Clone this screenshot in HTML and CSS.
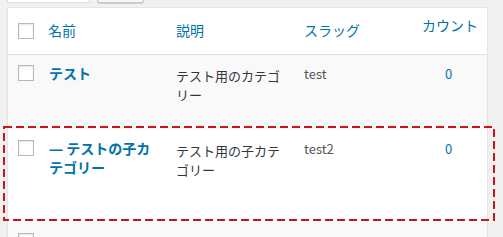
FILE: index.html
```html
<!DOCTYPE html>
<html lang="ja">
<head>
<meta charset="utf-8">
<link rel="stylesheet" href="styles.css">
</head>
<body>
<div class="page">
  <div class="toolbar">
    <div class="search-input"></div>
    <div class="search-btn"></div>
  </div>
  <div class="list">
    <div class="row head">
      <div class="cell check"><span class="cb"></span></div>
      <div class="cell name"><span class="th">名前</span></div>
      <div class="cell desc"><span class="th">説明</span></div>
      <div class="cell slug"><span class="th">スラッグ</span></div>
      <div class="cell count count-head"><span class="th">カウント</span></div>
    </div>
    <div class="row alt r1">
      <div class="cell check"><span class="cb"></span></div>
      <div class="cell name"><a class="title">テスト</a></div>
      <div class="cell desc">テスト用のカテゴリー</div>
      <div class="cell slug">test</div>
      <div class="cell count"><a class="num">0</a></div>
    </div>
    <div class="row r2">
      <div class="cell check"><span class="cb"></span></div>
      <div class="cell name"><a class="title"><span class="dash">—</span> テストの子カテゴリー</a></div>
      <div class="cell desc">テスト用の子カテゴリー</div>
      <div class="cell slug">test2</div>
      <div class="cell count"><a class="num">0</a></div>
    </div>
    <div class="row alt r3">
      <div class="cell check"><span class="cb"></span></div>
      <div class="cell name"></div>
      <div class="cell desc"></div>
      <div class="cell slug"></div>
      <div class="cell count"></div>
    </div>
  </div>
  <svg class="highlight" width="492" height="95" viewBox="0 0 492 95">
    <rect x="1" y="1" width="490" height="93" fill="none" stroke="#c8161d" stroke-width="2" stroke-dasharray="8 4"/>
  </svg>
</div>
</body>
</html>
```
FILE: styles.css
```css
html, body {
  margin: 0;
  padding: 0;
  background: #f1f1f1;
  overflow: hidden;
}
body {
  font-family: "Noto Sans CJK JP", "Noto Sans", sans-serif;
  color: #32373c;
}
.page {
  position: relative;
  display: flow-root;
  width: 503px;
  height: 237px;
  padding-left: 7px;
  box-sizing: border-box;
}
.toolbar {
  display: flex;
  gap: 7px;
  margin-top: -26px;
  height: 29px;
}
.search-input {
  width: 81px;
  height: 27px;
  background: #fff;
  border: 1px solid #ddd;
  box-shadow: inset 0 1px 2px rgba(0,0,0,.07);
}
.search-btn {
  width: 45px;
  height: 27px;
  background: #f7f7f7;
  border: 1px solid #ccc;
  border-radius: 3px;
  box-shadow: 0 1px 0 #ccc;
}
.list {
  margin-top: 4px;
  width: 481px;
  box-sizing: border-box;
  background: #fff;
  border: 1px solid #e5e5e5;
  box-shadow: 0 1px 1px rgba(0,0,0,.04);
}
.row {
  display: grid;
  grid-template-columns: 32px 128px 128px 114px 1fr;
}
.row.alt { background: #f9f9f9; }
.head {
  height: 47px;
  box-sizing: border-box;
  border-bottom: 1px solid #e1e1e1;
  background: #fff;
}
.r1 { height: 75px; }
.r2 { height: 93px; }
.r3 { height: 40px; }
.cell {
  font-size: 13px;
  line-height: 19px;
  padding-top: 9px;
}
.check { padding-left: 10px; padding-top: 10px; }
.cb {
  display: block;
  width: 14px;
  height: 14px;
  border: 1px solid #b4b9be;
  background: #fff;
  box-shadow: inset 0 1px 2px rgba(0,0,0,.1);
}
.name { padding-left: 8px; padding-right: 8px; }
.desc { padding-left: 8px; padding-right: 6px; padding-top: 11px; color: #32373c; }
.slug { padding-left: 8px; color: #555; }
.count { text-align: center; }
.head .cell { padding-top: 13px; }
.head .check { padding-top: 15px; }
.head .count-head { padding-top: 8px; text-align: left; padding-left: 12px; }
.th {
  font-size: 14px;
  color: #0073aa;
}
.title {
  font-size: 14px;
  font-weight: bold;
  color: #0073aa;
  display: block;
  padding-left: 1px;
}
.dash {
  font-family: "Noto Sans", sans-serif;
  font-weight: bold;
}
.num {
  color: #0073aa;
  font-size: 13px;
}
.highlight {
  position: absolute;
  left: 3px;
  top: 126px;
}
```
